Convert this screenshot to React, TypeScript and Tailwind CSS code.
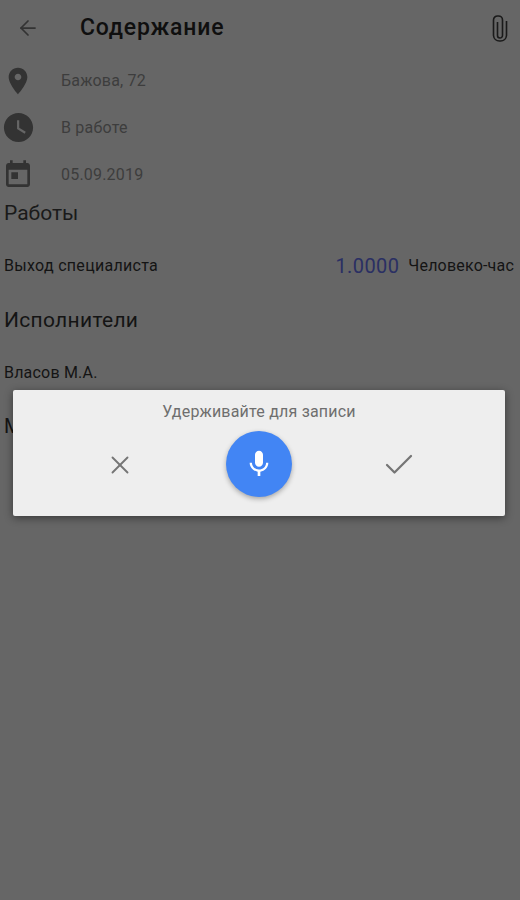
import { ArrowLeft, X, Check } from 'lucide-react';

function PlaceIcon() {
  return (
    <svg viewBox="0 0 24 24" className="h-8 w-8 fill-[#333333]">
      <path d="M12 2C8.13 2 5 5.13 5 9c0 5.25 7 13 7 13s7-7.75 7-13c0-3.87-3.13-7-7-7zm0 9.5c-1.38 0-2.5-1.12-2.5-2.5s1.12-2.5 2.5-2.5 2.5 1.12 2.5 2.5-1.12 2.5-2.5 2.5z" />
    </svg>
  );
}

function ClockIcon() {
  return (
    <svg viewBox="0 0 24 24" className="h-[35px] w-[35px] fill-[#333333]">
      <path d="M12 2C6.5 2 2 6.5 2 12s4.5 10 10 10 10-4.5 10-10S17.5 2 12 2zm4.2 14.2L11 13V7h1.5v5.2l4.5 2.7-.8 1.3z" />
    </svg>
  );
}

function TodayIcon() {
  return (
    <svg viewBox="0 0 24 24" className="h-8 w-8 fill-[#333333]">
      <path d="M19 3h-1V1h-2v2H8V1H6v2H5c-1.11 0-1.99.9-1.99 2L3 19c0 1.1.89 2 2 2h14c1.1 0 2-.9 2-2V5c0-1.1-.9-2-2-2zm0 16H5V8h14v11zM7 10h5v5H7z" />
    </svg>
  );
}

function MicIcon() {
  return (
    <svg viewBox="0 0 24 24" className="h-8 w-8 fill-white">
      <path d="M12 14c1.66 0 2.99-1.34 2.99-3L15 5c0-1.66-1.34-3-3-3S9 3.34 9 5v6c0 1.66 1.34 3 3 3zm5.3-3c0 3-2.54 5.1-5.3 5.1S6.7 14 6.7 11H5c0 3.41 2.72 6.23 6 6.72V21h2v-3.28c3.28-.48 6-3.3 6-6.72h-1.7z" />
    </svg>
  );
}

// vertical paper clip, the lucide one is slanted
function ClipIcon() {
  return (
    <svg viewBox="0 0 16 27" className="h-[27px] w-[16px] fill-none stroke-[#1a1a1a] stroke-[1.6]">
      <path d="M14.5 6v14.5a6 6 0 0 1-6 5.5h-1a6 6 0 0 1-6-5.5V5a4 4 0 0 1 4-4h1a4 4 0 0 1 4 4v15.5a2.5 2.5 0 0 1-5 0V7" />
    </svg>
  );
}

function InfoRow({ icon, text }: { icon: React.ReactNode; text: string }) {
  return (
    <div className="flex h-[47px] items-center">
      <div className="flex w-[36px] justify-center">{icon}</div>
      <span className="ml-[25px] text-base tracking-[0.2px] text-[#3d3d3d]">{text}</span>
    </div>
  );
}

export default function App() {
  return (
    <div className="relative h-[900px] w-[520px] overflow-hidden bg-[#666666] font-['Roboto',sans-serif]">
      {/* Toolbar */}
      <header className="flex h-[56px] items-center">
        <ArrowLeft className="ml-[16px] h-6 w-6 text-[#333333]" strokeWidth={1.75} />
        <h1 className="ml-[40px] text-[23px] font-medium tracking-[0.8px] text-[#0f0f0f]">Содержание</h1>
        <div className="ml-auto mr-[12px] flex">
          <ClipIcon />
        </div>
      </header>

      {/* Details */}
      <div className="mt-[1px]">
        <InfoRow icon={<PlaceIcon />} text="Бажова, 72" />
        <InfoRow icon={<ClockIcon />} text="В работе" />
        <InfoRow icon={<TodayIcon />} text="05.09.2019" />
      </div>

      <section className="px-[4px]">
        <h2 className="mt-[1px] text-[21px] leading-[28px] text-[#1a1a1a]">Работы</h2>
        <div className="mt-[24px] flex h-[30px] items-center">
          <span className="text-base tracking-[0.3px] text-[#141414]">Выход специалиста</span>
          <span className="ml-auto text-xl tracking-[0.4px] text-[#2a2f63]">1.0000</span>
          <span className="ml-[9px] mr-[2px] text-base tracking-[0.2px] text-[#141414]">Человеко-час</span>
        </div>
        <h2 className="mt-[25px] text-[21px] leading-[28px] tracking-[0.3px] text-[#141414]">Исполнители</h2>
        <div className="mt-[29px] h-[20px] text-base leading-[20px] tracking-[0.2px] text-[#141414]">Власов М.А.</div>
        <h2 className="mt-[29px] text-xl leading-[28px] text-[#141414]">Материалы</h2>
      </section>

      {/* Voice record dialog */}
      <div className="absolute left-[13px] top-[390px] h-[126px] w-[492px] rounded-[2px] bg-[#eeeeee] shadow-[0_2px_8px_rgba(0,0,0,0.45)]">
        <p className="pt-[12px] text-center text-base leading-[20px] tracking-[0.2px] text-[#6e6e6e]">Удерживайте для записи</p>
        <div className="relative mt-[9px] flex items-center justify-center">
          <X className="absolute left-[92px] mt-[2px] h-[30px] w-[30px] text-[#757575]" strokeWidth={1.5} />
          <button className="flex h-[66px] w-[66px] items-center justify-center rounded-full bg-[#4285f4] shadow-[0_2px_5px_rgba(0,0,0,0.3)]">
            <MicIcon />
          </button>
          <Check className="absolute left-[368px] mt-[2px] h-[36px] w-[36px] text-[#757575]" strokeWidth={1.5} />
        </div>
      </div>
    </div>
  );
}
